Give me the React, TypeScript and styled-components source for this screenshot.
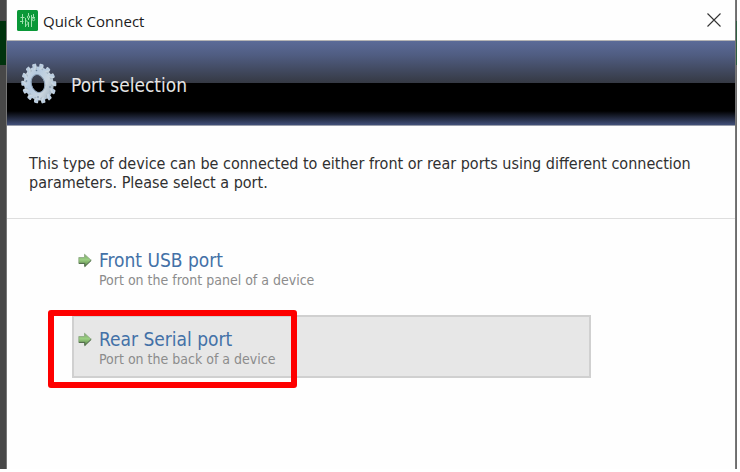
import React from "react";
import styled, { createGlobalStyle } from "styled-components";

const GlobalStyle = createGlobalStyle`
  * { box-sizing: border-box; }
  body { margin: 0; background: #fff; }
  button { font: inherit; }
`;

const uiFont = `"DejaVu Sans Condensed", Tahoma, "DejaVu Sans", sans-serif`;

const Desktop = styled.div`
  display: flex;
  min-height: 100vh;
  padding: 0 3px 3px 0;
  font-family: ${uiFont};
`;

const Strip = styled.div<{ $side: "left" | "right" }>`
  flex: none;
  width: ${(p) => (p.$side === "left" ? 6 : 1)}px;
  background: linear-gradient(
    ${(p) => (p.$side === "left" ? "#484848" : "#6c6c6c")} 21px,
    ${(p) => (p.$side === "left" ? "#00330d" : "#2f5f42")} 21px 65px,
    ${(p) => (p.$side === "left" ? "#484848" : "#6c6c6c")} 65px
  );
`;

const Dialog = styled.main`
  flex: 1;
  min-width: 0;
  background: #fefefe;
  border: solid #777;
  border-width: 0 1px;
`;

const TitleBar = styled.header`
  display: flex;
  align-items: center;
  height: 41px;
  padding: 0 14px 0 10px;
  border-bottom: 1px solid #b5b5b5;
`;

const Title = styled.h1`
  flex: 1;
  margin: 0 0 0 5px;
  padding-top: 2px;
  color: #1c1c1c;
  font: 400 15px/20px "Open Sans", "Segoe UI", sans-serif;
`;

const CloseButton = styled.button`
  display: flex;
  padding: 0;
  border: 0;
  background: none;
  cursor: pointer;
`;

const Banner = styled.div`
  display: flex;
  align-items: center;
  gap: 14px;
  height: 85px;
  padding-left: 13px;
  border-bottom: 1px solid #9a9fac;
  background: linear-gradient(#5b6b98 0, #505d82 14px, #353943 42px, #000 42px, #000 70px, #42507a 84px);
`;

const BannerTitle = styled.h2`
  margin: 0;
  padding-top: 3px;
  color: #e4e4e4;
  font-size: 19px;
  font-weight: 400;
  line-height: 24px;
`;

const Intro = styled.p`
  margin: 0;
  padding: 28px 16px 26px 22px;
  border-bottom: 1px solid #dedede;
  color: #303030;
  font-size: 16px;
  line-height: 19px;
`;

const Options = styled.div`
  display: flex;
  flex-direction: column;
  gap: 16px;
  padding: 17px 144px 24px 65px;
`;

const OptionSlot = styled.div`
  position: relative;
`;

const Option = styled.button<{ $active?: boolean }>`
  display: grid;
  grid-template-columns: 14px 1fr;
  column-gap: 7px;
  width: 100%;
  height: 63px;
  padding: 11px 4px;
  border: 2px solid ${(p) => (p.$active ? "#d0d0d0" : "transparent")};
  background: ${(p) => (p.$active ? "#e7e7e7" : "transparent")};
  text-align: left;
  cursor: pointer;
`;

const OptionText = styled.span`
  display: flex;
  flex-direction: column;
`;

const OptionTitle = styled.span`
  color: #4371a7;
  font-size: 19px;
  line-height: 22px;
`;

const OptionNote = styled.span`
  color: #8c8c8c;
  font-size: 14px;
  line-height: 18px;
`;

const Highlight = styled.div`
  position: absolute;
  top: -5px;
  left: -24px;
  width: 249px;
  height: 78px;
  border: 6px solid #fe0000;
  border-radius: 3px;
  pointer-events: none;
`;

const ArrowSvg = styled.svg`
  margin-top: 4px;
`;

function AppIcon() {
  return (
    <svg width="21" height="21" viewBox="0 0 21 21" aria-hidden="true">
      <rect width="21" height="21" rx="1.5" fill="#0a9838" />
      <g fill="none" stroke="#9fe0ae" strokeWidth="1">
        <path d="M3.5 7.5h4M3 11.5h3.5M5.5 4v10M8.5 8v9M8.5 10l3 3M11.500 3v3M11.500 8v2M11.500 12v5M14.500 5v12M8.500 16l3-3M15 7.500h3M16.500 4v4" />
        <circle cx="11.5" cy="7" r="1.2" />
        <circle cx="16.5" cy="9.500" r="1.200" />
      </g>
    </svg>
  );
}

function GearIcon() {
  const teeth = Array.from({ length: 14 }, (_, i) => (i * 360) / 14);
  return (
    <svg width="37" height="42" viewBox="0 0 37 42" aria-hidden="true">
      <defs>
        <linearGradient id="steel" x1="0" y1="0" x2="1" y2="1">
          <stop offset="0" stopColor="#d9e0e5" />
          <stop offset="0.35" stopColor="#b4c9df" />
          <stop offset="0.65" stopColor="#cbd7e0" />
          <stop offset="1" stopColor="#8fa3b5" />
        </linearGradient>
        <mask id="hub">
          <rect width="37" height="42" fill="#fff" />
          <ellipse cx="18" cy="21.5" rx="6.3" ry="8.800" transform="rotate(-14 18 21.5)" fill="#000" />
        </mask>
      </defs>
      <g mask="url(#hub)" fill="url(#steel)">
        <g transform="translate(18.8 21.500) rotate(-14) scale(.86 1)">
          <circle r="17.200" />
          {teeth.map((a) => (
            <rect key={a} x="-2.4" y="-20.2" width="4.800" height="6" rx="1.200" transform={`rotate(${a})`} />
          ))}
        </g>
      </g>
      <ellipse cx="18" cy="21.5" rx="6.700" ry="9.200" transform="rotate(-14 18 21.5)" fill="none" stroke="#8196ad" strokeWidth=".8" />
      <g fill="#647c96">
        <circle cx="16.500" cy="8.500" r=".8" />
        <circle cx="6.500" cy="19" r=".8" />
        <circle cx="18" cy="35" r=".8" />
        <circle cx="30" cy="25" r=".8" />
      </g>
    </svg>
  );
}

function ArrowIcon() {
  return (
    <ArrowSvg width="14" height="15" viewBox="0 0 14 15" aria-hidden="true">
      <defs>
        <linearGradient id="leaf" x1="0" y1="0" x2="0" y2="1">
          <stop offset="0" stopColor="#7aaa65" />
          <stop offset=".45" stopColor="#9bcf83" />
          <stop offset="1" stopColor="#55843f" />
        </linearGradient>
      </defs>
      <path d="M.8 4.5H6.5V1.2L13.2 7.3L6.8 13.5V10.2H.8Z" fill="url(#leaf)" stroke="#8aa682" strokeWidth=".8" />
      <path d="M.8 10.4H6.8V13.5L13.2 7.4" fill="none" stroke="#4b6645" strokeWidth="1" />
    </ArrowSvg>
  );
}

const options = [
  { title: "Front USB port", note: "Port on the front panel of a device", active: false },
  { title: "Rear Serial port", note: "Port on the back of a device", active: true },
];

export default function App() {
  return (
    <>
      <GlobalStyle />
      <Desktop>
        <Strip $side="left" />
        <Dialog>
          <TitleBar>
            <AppIcon />
            <Title>Quick Connect</Title>
            <CloseButton type="button" aria-label="Close">
              <svg width="14" height="14" viewBox="0 0 14 14" aria-hidden="true">
                <path d="M.5.5l13 13M13.5.5l-13 13" stroke="#333" strokeWidth="1.1" />
              </svg>
            </CloseButton>
          </TitleBar>
          <Banner>
            <GearIcon />
            <BannerTitle>Port selection</BannerTitle>
          </Banner>
          <Intro>
            This type of device can be connected to either front or rear ports using different connection
            parameters. Please select a port.
          </Intro>
          <Options>
            {options.map((o) => (
              <OptionSlot key={o.title}>
                <Option type="button" $active={o.active}>
                  <ArrowIcon />
                  <OptionText>
                    <OptionTitle>{o.title}</OptionTitle>
                    <OptionNote>{o.note}</OptionNote>
                  </OptionText>
                </Option>
                {o.active && <Highlight />}
              </OptionSlot>
            ))}
          </Options>
        </Dialog>
        <Strip $side="right" />
      </Desktop>
    </>
  );
}
